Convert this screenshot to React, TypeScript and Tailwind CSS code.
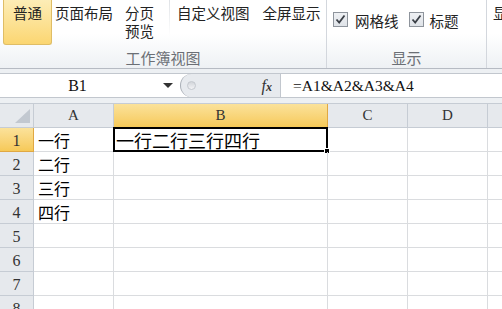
import React from "react";

const cjk = { fontFamily: '"Noto Sans CJK SC", "Noto Sans", sans-serif' };
const serif = { fontFamily: '"Liberation Serif", "Noto Sans CJK SC", serif' };

function Check() {
  return (
    <div className="w-[15px] h-[15px] border border-[#8e949c] bg-gradient-to-b from-[#eef0f3] to-[#dfe3e8] flex items-center justify-center">
      <svg width="11" height="11" viewBox="0 0 11 11">
        <path d="M1.5 5.5 L4.2 8.5 L9.5 1.5" fill="none" stroke="#3a3f46" strokeWidth="1.8" />
      </svg>
    </div>
  );
}

const rows = ["一行", "二行", "三行", "四行", "", "", "", ""];

export default function App() {
  return (
    <div className="w-[502px] h-[309px] overflow-hidden bg-white flex flex-col" style={cjk}>
      {/* Ribbon */}
      <div className="h-[69px] shrink-0 flex border-b border-[#b6bbc3] bg-gradient-to-b from-white via-white to-[#eef1f4]">
        <div className="w-[327px] shrink-0 flex flex-col border-r border-[#d3d7dd]">
          <div className="h-[47px] flex items-start text-[14.5px] leading-[18px] text-[#222]">
            <div className="ml-[3px] w-[49px] h-[45px] rounded-b-[3px] border border-t-0 border-[#dfbd66] bg-gradient-to-b from-[#fdedb6] to-[#fbd671] flex justify-center pt-[4px]">
              普通
            </div>
            <div className="ml-[3px] pt-[4px]">页面布局</div>
            <div className="ml-[12px] pt-[4px] flex flex-col">
              <span>分页</span>
              <span>预览</span>
            </div>
            <div className="ml-[15px] w-px h-[36px] bg-gradient-to-b from-[#dfe2e6] to-transparent" />
            <div className="ml-[7px] pt-[4px]">自定义视图</div>
            <div className="ml-[13px] pt-[4px]">全屏显示</div>
          </div>
          <div className="flex-1 flex justify-center pt-[2px] text-[15px] leading-[18px] text-[#6b6f75]">工作簿视图</div>
        </div>
        <div className="w-[160px] shrink-0 flex flex-col border-r border-[#d3d7dd]">
          <div className="h-[47px] flex items-start text-[14.5px] leading-[18px] text-[#222]">
            <div className="ml-[6px] mt-[12px]"><Check /></div>
            <div className="ml-[7px] pt-[12px]">网格线</div>
            <div className="ml-[10px] mt-[12px]"><Check /></div>
            <div className="ml-[6px] pt-[12px]">标题</div>
          </div>
          <div className="flex-1 flex justify-center pt-[2px] text-[15px] leading-[18px] text-[#6b6f75]">显示</div>
        </div>
        <div className="flex-1 pl-[6px] pt-[4px] text-[14.5px] leading-[18px] text-[#222] overflow-hidden whitespace-nowrap">显示</div>
      </div>

      {/* Formula bar */}
      <div className="h-[34px] shrink-0 bg-[#edf0f3] pt-[4px]">
        <div className="h-[25px] bg-white border-y border-[#c2c7ce] flex items-center">
          <div className="w-[155px] flex justify-center text-[16px] text-[#111]" style={serif}>B1</div>
          <svg width="10" height="5" viewBox="0 0 10 5" className="ml-[8px]">
            <path d="M0 0 H10 L5 5 Z" fill="#333" />
          </svg>
          <div className="ml-[7px] w-[100px] h-full relative flex items-center bg-[#e7eaee] border-l border-[#a9aeb6] rounded-l-[12px]">
            <div className="ml-[6px] w-[9px] h-[9px] rounded-full bg-gradient-to-b from-[#d2d5da] to-[#f3f4f6] border border-[#c4c8ce]" />
            <div className="ml-auto mr-[8px] italic text-[16px] text-[#333] leading-none" style={serif}>
              f<span className="text-[12px] font-bold">x</span>
            </div>
          </div>
          <div className="w-px h-full bg-[#c2c7ce]" />
          <div className="ml-[12px] text-[15.5px] text-[#111]" style={serif}>=A1&amp;A2&amp;A3&amp;A4</div>
        </div>
      </div>

      {/* Grid */}
      <div className="grid grid-cols-[34px_80px_214px_80px_80px_1fr] auto-rows-[24px] border-t border-[#c6ccd4]" style={serif}>
        <div className="bg-[#e6e9ed] border-r border-b border-[#c6ccd4] relative">
          <svg width="16" height="15" viewBox="0 0 16 15" className="absolute left-[15px] top-[5px]">
            <path d="M15 0 V14 H0 Z" fill="#c2c8d0" />
          </svg>
        </div>
        <div className="bg-[#e6e9ed] border-r border-b border-[#c6ccd4] flex items-center justify-center text-[15px] text-[#333]">A</div>
        <div className="bg-gradient-to-b from-[#fbe29a] to-[#f6c957] border-r border-b border-[#e0a843] flex items-center justify-center text-[15px] text-[#333]">B</div>
        <div className="bg-[#e6e9ed] border-r border-b border-[#c6ccd4] flex items-center justify-center text-[15px] text-[#333]">C</div>
        <div className="bg-[#e6e9ed] border-r border-b border-[#c6ccd4] flex items-center justify-center text-[15px] text-[#333]">D</div>
        <div className="bg-[#e6e9ed] border-b border-[#c6ccd4]" />
        {rows.map((t, i) => (
          <React.Fragment key={i}>
            <div
              className={
                i === 0
                  ? "bg-gradient-to-b from-[#fbe29a] to-[#f6c957] border-r border-b border-[#e0a843] flex items-center justify-center pt-[2px] text-[16px] text-[#333]"
                  : "bg-[#e6e9ed] border-r border-b border-[#c6ccd4] flex items-center justify-center pt-[2px] text-[16px] text-[#333]"
              }
            >
              {i + 1}
            </div>
            <div className="border-r border-b border-[#dadcdf] flex items-end pl-[4px] pb-[1px] text-[16px] leading-[20px] text-black" style={cjk}>
              {t}
            </div>
            <div className="border-r border-b border-[#dadcdf] relative">
              {i === 0 && (
                <div className="absolute -left-px -top-px -right-px -bottom-px border-2 border-black flex items-end pl-[1px] text-[18px] leading-[20px] text-black" style={cjk}>
                  一行二行三行四行
                  <div className="absolute -right-[4px] -bottom-[4px] w-[6px] h-[6px] bg-black border border-white" />
                </div>
              )}
            </div>
            <div className="border-r border-b border-[#dadcdf]" />
            <div className="border-r border-b border-[#dadcdf]" />
            <div className="border-b border-[#dadcdf]" />
          </React.Fragment>
        ))}
      </div>
    </div>
  );
}
